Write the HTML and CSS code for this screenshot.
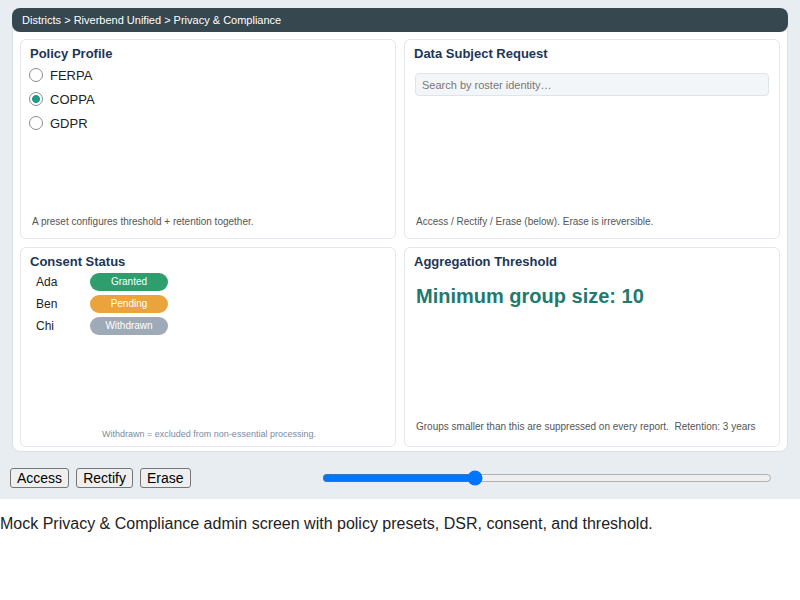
FILE: index.html
```html
<!DOCTYPE html>
<html lang="en">
<head>
  <meta charset="UTF-8">
  <title>Privacy &amp; Compliance</title>
  <link rel="stylesheet" href="styles.css">
</head>
<body>

  <!-- Admin panel -->
  <div class="panel">
    <div class="card">
      <div class="crumbs">Districts &gt; Riverbend Unified &gt; Privacy &amp; Compliance</div>

      <div class="grid">
        <!-- Policy presets -->
        <section class="cell">
          <h2 class="cell-title">Policy Profile</h2>
          <label class="radio-row"><input type="radio" name="policy" value="ferpa"> FERPA</label>
          <label class="radio-row"><input type="radio" name="policy" value="coppa" checked> COPPA</label>
          <label class="radio-row"><input type="radio" name="policy" value="gdpr"> GDPR</label>
          <p class="note">A preset configures threshold + retention together.</p>
        </section>

        <!-- DSR -->
        <section class="cell">
          <h2 class="cell-title">Data Subject Request</h2>
          <input class="search" type="text" placeholder="Search by roster identity…">
          <p class="note">Access / Rectify / Erase (below). Erase is irreversible.</p>
        </section>

        <!-- Consent -->
        <section class="cell">
          <h2 class="cell-title">Consent Status</h2>
          <div class="consent">
            <span class="who">Ada</span><span class="badge granted">Granted</span>
            <span class="who">Ben</span><span class="badge pending">Pending</span>
            <span class="who">Chi</span><span class="badge withdrawn">Withdrawn</span>
          </div>
          <p class="note note-center">Withdrawn = excluded from non-essential processing.</p>
        </section>

        <!-- Threshold -->
        <section class="cell">
          <h2 class="cell-title">Aggregation Threshold</h2>
          <div class="big">Minimum group size: <span id="k">10</span></div>
          <p class="note note-low">Groups smaller than this are suppressed on every report. &nbsp;Retention: 3 years</p>
        </section>
      </div>
    </div>

    <div class="toolbar">
      <button>Access</button>
      <button>Rectify</button>
      <button>Erase</button>
      <input class="slider" type="range" min="0" max="30" value="10">
    </div>
  </div>

  <p class="caption">Mock Privacy &amp; Compliance admin screen with policy presets, DSR, consent, and threshold.</p>

</body>
</html>
```

FILE: styles.css
```css
/* Reset */
* {
  box-sizing: border-box;
}

body {
  margin: 0;
  font-family: "Liberation Sans", Arial, sans-serif;
  background: #fff;
  color: #222;
}

/* Grey admin area */
.panel {
  background: #e8edf1;
  padding: 8px 12px 0;
}

.card {
  background: #fff;
  border: 1px solid #dbe2e8;
  border-radius: 8px;
  padding-bottom: 4px;
}

.crumbs {
  margin: -1px -1px 0;
  height: 24px;
  line-height: 24px;
  padding: 0 10px;
  background: #37474f;
  color: #fff;
  font-size: 11px;
  border-radius: 8px;
}

.grid {
  display: grid;
  grid-template-columns: 1fr 1fr;
  grid-auto-rows: 200px;
  gap: 8px;
  padding: 7px 7px 0;
}

.cell {
  display: flex;
  flex-direction: column;
  align-items: flex-start;
  border: 1px solid #e2e8ee;
  border-radius: 6px;
  padding: 6px 9px 11px;
}

.cell-title {
  margin: 0 0 1px;
  font-size: 13px;
  line-height: 16px;
  color: #1d3557;
}

/* Radios */
.radio-row {
  display: flex;
  align-items: center;
  height: 24px;
  font-size: 13px;
}

.radio-row input {
  appearance: none;
  width: 14px;
  height: 14px;
  margin: 0 7px 0 -1px;
  border: 1px solid #8d8d8d;
  border-radius: 50%;
  background: #fff;
}

.radio-row input:checked {
  background: radial-gradient(circle, #239a86 0 3.6px, #fff 4.2px);
}

.note {
  margin: auto 0 0;
  padding-left: 2px;
  font-size: 10px;
  color: #555;
}

.note-center {
  align-self: stretch;
  text-align: center;
  font-size: 9px;
  color: #7a8ba4;
  margin-bottom: -4px;
}

.note-low {
  padding-bottom: 3px;
}

/* DSR search */
.search {
  align-self: stretch;
  margin: 10px 1px 0 1px;
  height: 23px;
  padding: 0 6px;
  border: 1px solid #dde4ea;
  border-radius: 4px;
  background: #f3f6f9;
  font-family: inherit;
  font-size: 11px;
}

.search::placeholder {
  color: #777;
}

/* Consent table */
.consent {
  display: grid;
  grid-template-columns: 54px 78px;
  grid-auto-rows: 22px;
  align-items: center;
  padding-left: 6px;
  font-size: 12px;
}

.badge {
  height: 18px;
  line-height: 18px;
  border-radius: 9px;
  text-align: center;
  color: #fff;
  font-size: 10px;
}

.granted { background: #2e9e6f; }
.pending { background: #eba33b; }
.withdrawn { background: #9eaab6; }

/* Threshold */
.big {
  margin: 14px 0 0 2px;
  font-size: 20px;
  font-weight: bold;
  color: #1f7a6e;
}

/* Action bar */
.toolbar {
  display: flex;
  align-items: center;
  gap: 7px;
  padding: 16px 16px 11px 0;
  margin-left: -2px;
}

.toolbar button {
  font-family: "Liberation Sans", Arial, sans-serif;
  font-size: 14px;
  padding: 1px 6px;
  color: #000;
  background: #efefef;
  border: 1px solid #767676;
  border-radius: 3px;
}

.slider {
  margin: 0 0 0 auto;
  width: 450px;
}

.caption {
  font-size: 16px;
  margin: 16px 0;
}
```
